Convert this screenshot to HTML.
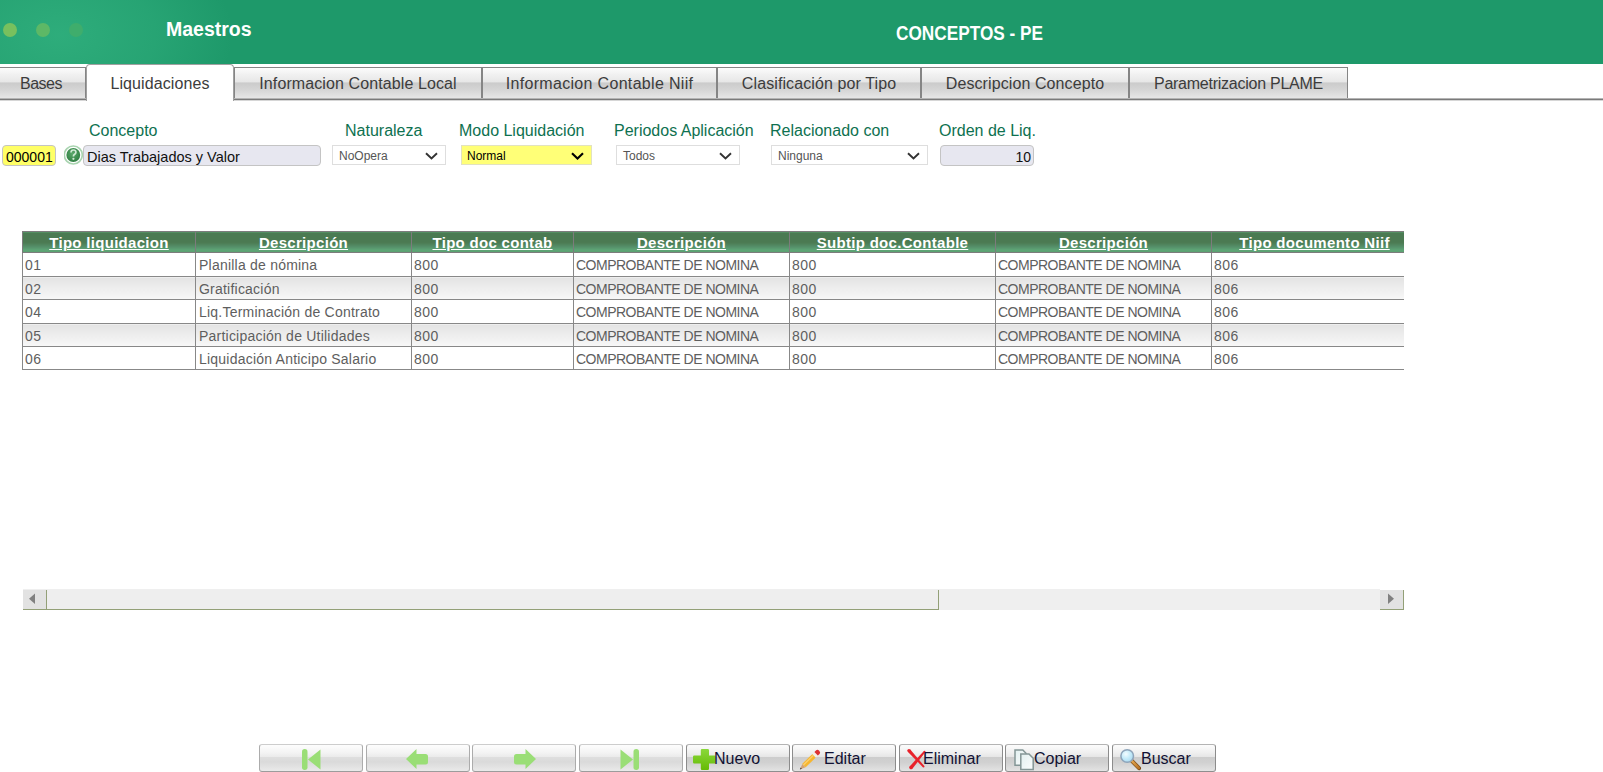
<!DOCTYPE html>
<html>
<head>
<meta charset="utf-8">
<style>
*{box-sizing:border-box;margin:0;padding:0}
html,body{width:1603px;height:772px;overflow:hidden;background:#fff;font-family:"Liberation Sans",sans-serif;position:relative}
.abs{position:absolute}
#hdr{left:0;top:0;width:1603px;height:64px;background:#1e996a;overflow:hidden}
#hdr .glow{left:-110px;top:-70px;width:340px;height:210px;background:radial-gradient(ellipse at center,rgba(62,192,140,0.50) 0%,rgba(62,192,140,0.28) 40%,rgba(62,192,140,0) 72%)}
.dot{width:14px;height:14px;border-radius:50%;top:23px}
#t1{left:166px;top:18px;color:#fff;font-weight:bold;font-size:19.5px;line-height:22px;white-space:nowrap}
#t2{left:896px;top:21.5px;color:#fff;font-weight:bold;font-size:20.5px;line-height:22px;white-space:nowrap;transform:scaleX(0.84);transform-origin:0 0}
#tabline{left:0;top:98px;width:1603px;height:3px;z-index:2;background:linear-gradient(#b4b4b4 0%,#b4b4b4 33.3%,#7a7a7a 33.3%,#7a7a7a 66.6%,#d6d6d6 66.6%)}
.tab{position:absolute;top:67px;height:33px;border:1px solid #858585;border-bottom:none;
 background:linear-gradient(#fcfcfc 0%,#f1f1f1 20%,#e7e7e7 43%,#cbcbcb 47%,#d5d5d5 68%,#e5e5e5 92%,#e9e9e9 100%);
 color:#3c3c3c;font-size:16px;letter-spacing:0.1px;text-align:center;line-height:29px;padding-top:1px;white-space:nowrap}
.tab.act{top:64px;height:37px;z-index:3;background:#fff;border-bottom:none;border-radius:4px 4px 0 0;line-height:35px;border-color:#a0a0a0}
.lbl{position:absolute;top:121.5px;color:#0e7150;font-size:16px;line-height:18px;white-space:nowrap}
.inp{position:absolute;top:145px;height:21px;border:1px solid #c4c4c4;border-radius:4px;background:#e7e7f0;color:#111;font-size:14px;line-height:21px;white-space:nowrap;overflow:hidden}
.sel{position:absolute;top:145px;height:20px;border:1px solid #dedede;background:#fff;color:#555;font-size:12px;line-height:20px;padding-left:6px;white-space:nowrap}
.sel svg{position:absolute;right:7px;top:6px}
#grid{left:22px;top:231px;width:1382px;height:140px;overflow:hidden}
table{border-collapse:collapse;table-layout:fixed;font-size:14px}
th{height:21px;border:1px solid #7c7c7c;background:linear-gradient(#4b7a52 0%,#4b7a52 50%,#55906a 72%,#5ea676 88%,#5aa070 100%);color:#fff;font-weight:bold;font-size:15px;letter-spacing:0.3px;text-decoration:underline;text-align:center;white-space:nowrap;padding:1px 0 0 0;line-height:18px}
td{border:1px solid #888;color:#5e5e5e;padding:3px 0 0 2px;white-space:nowrap;line-height:18px;vertical-align:top}
td.m{letter-spacing:0.22px;padding-left:3px}
td.u{letter-spacing:-0.5px}
td.d{letter-spacing:0.5px}
tr.alt td{background:linear-gradient(#e3e3e3,#f8f8f8)}
.sbtn{position:absolute;top:590px;width:24px;height:20px;background:#e2e2e2}
.btn{position:absolute;top:744px;height:28px;width:104px;border:1px solid #acacac;border-top-color:#cdcdcd;border-bottom-color:#9c9c9c;border-radius:3px;
 background:linear-gradient(#fdfdfd 0%,#f3f3f3 30%,#ebebeb 45%,#dedede 48%,#dadada 65%,#e5e5e5 90%,#eaeaea 100%);color:#111133;font-size:16px;white-space:nowrap}
.btn.dk{border-color:#8c8c8c;border-top-color:#b4b4b4;border-bottom-color:#8e8e8e;background:linear-gradient(#fcfcfc 0%,#efefef 30%,#e6e6e6 45%,#cdcdcd 48%,#d1d1d1 68%,#e0e0e0 95%,#e4e4e4 100%)}
.btn svg{position:absolute}
.btn span{position:absolute;top:5px;line-height:18px}
</style>
</head>
<body>
<div id="hdr" class="abs">
  <div class="glow abs"></div>
  <div class="dot abs" style="left:3px;background:#78c05e"></div>
  <div class="dot abs" style="left:36px;background:#5db866"></div>
  <div class="dot abs" style="left:69px;background:#3fad6c"></div>
  <div id="t1" class="abs">Maestros</div>
  <div id="t2" class="abs">CONCEPTOS - PE</div>
</div>
<div id="tabline" class="abs"></div>
<div class="tab" style="left:-20px;width:106px;letter-spacing:-0.5px;text-align:left;padding-left:39px">Bases</div>
<div class="tab act" style="left:86px;width:148px">Liquidaciones</div>
<div class="tab" style="left:234px;width:248px">Informacion Contable Local</div>
<div class="tab" style="left:482px;width:235px;letter-spacing:0.32px">Informacion Contable Niif</div>
<div class="tab" style="left:717px;width:204px">Clasificación por Tipo</div>
<div class="tab" style="left:921px;width:208px">Descripcion Concepto</div>
<div class="tab" style="left:1129px;width:219px;letter-spacing:-0.25px">Parametrizacion PLAME</div>

<div class="lbl" style="left:89px">Concepto</div>
<div class="lbl" style="left:345px">Naturaleza</div>
<div class="lbl" style="left:459px">Modo Liquidación</div>
<div class="lbl" style="left:614px">Periodos Aplicación</div>
<div class="lbl" style="left:770px">Relacionado con</div>
<div class="lbl" style="left:939px">Orden de Liq.</div>

<div class="inp" style="left:2px;width:54px;background:#ffff66;color:#000;padding-left:3px;line-height:23px">000001</div>
<svg class="abs" style="left:64px;top:145px" width="19" height="20" viewBox="0 0 19 20"><defs><radialGradient id="hq" cx="0.45" cy="0.4" r="0.65"><stop offset="0" stop-color="#5aa86a"/><stop offset="0.7" stop-color="#3a8a4c"/><stop offset="1" stop-color="#2e7a40"/></radialGradient></defs>
  <circle cx="9.3" cy="10" r="9" fill="none" stroke="#8cc596" stroke-width="1.6" opacity="0.75"/>
  <circle cx="9.3" cy="10" r="6.9" fill="url(#hq)"/>
  <path d="M7 7.6 Q7 5 9.4 5 Q11.9 5 11.9 7.3 Q11.9 8.7 10.4 9.6 Q9.4 10.2 9.4 11.4" fill="none" stroke="#cfe8d3" stroke-width="1.7"/>
  <circle cx="9.4" cy="13.8" r="1.1" fill="#cfe8d3"/>
</svg>
<div class="inp" style="left:83px;width:238px;padding-left:3px;font-size:14.5px;line-height:23px">Dias Trabajados y Valor</div>

<div class="sel" style="left:332px;width:114px;line-height:21px">NoOpera<svg width="13" height="8" viewBox="0 0 13 8"><path d="M1 1.2 L6.5 6.5 L12 1.2" fill="none" stroke="#333" stroke-width="1.9"/></svg></div>
<div class="sel" style="left:461px;width:131px;background:#ffff77;border-color:#e2e2c0;color:#000;padding-left:5px;line-height:21px">Normal<svg width="13" height="8" viewBox="0 0 13 8"><path d="M1 1.2 L6.5 6.5 L12 1.2" fill="none" stroke="#000" stroke-width="2.1"/></svg></div>
<div class="sel" style="left:616px;width:124px;line-height:21px">Todos<svg width="13" height="8" viewBox="0 0 13 8"><path d="M1 1.2 L6.5 6.5 L12 1.2" fill="none" stroke="#333" stroke-width="1.9"/></svg></div>
<div class="sel" style="left:771px;width:157px;line-height:21px">Ninguna<svg width="13" height="8" viewBox="0 0 13 8"><path d="M1 1.2 L6.5 6.5 L12 1.2" fill="none" stroke="#333" stroke-width="1.9"/></svg></div>
<div class="inp" style="left:940px;width:94px;text-align:right;padding-right:2px;line-height:23px">10</div>

<div id="grid" class="abs">
<table style="width:1395px">
<colgroup><col style="width:173px"><col style="width:216px"><col style="width:162px"><col style="width:216px"><col style="width:206px"><col style="width:216px"><col style="width:206px"></colgroup>
<tr><th>Tipo liquidacion</th><th>Descripción</th><th>Tipo doc contab</th><th>Descripción</th><th>Subtip doc.Contable</th><th>Descripción</th><th>Tipo documento Niif</th></tr>
<tr style="height:24px"><td class="d">01</td><td class="m">Planilla de nómina</td><td class="d">800</td><td class="u">COMPROBANTE DE NOMINA</td><td class="d">800</td><td class="u">COMPROBANTE DE NOMINA</td><td class="d">806</td></tr>
<tr class="alt" style="height:23px"><td class="d">02</td><td class="m">Gratificación</td><td class="d">800</td><td class="u">COMPROBANTE DE NOMINA</td><td class="d">800</td><td class="u">COMPROBANTE DE NOMINA</td><td class="d">806</td></tr>
<tr style="height:24px"><td class="d">04</td><td class="m">Liq.Terminación de Contrato</td><td class="d">800</td><td class="u">COMPROBANTE DE NOMINA</td><td class="d">800</td><td class="u">COMPROBANTE DE NOMINA</td><td class="d">806</td></tr>
<tr class="alt" style="height:23px"><td class="d">05</td><td class="m">Participación de Utilidades</td><td class="d">800</td><td class="u">COMPROBANTE DE NOMINA</td><td class="d">800</td><td class="u">COMPROBANTE DE NOMINA</td><td class="d">806</td></tr>
<tr style="height:23px"><td class="d">06</td><td class="m">Liquidación Anticipo Salario</td><td class="d">800</td><td class="u">COMPROBANTE DE NOMINA</td><td class="d">800</td><td class="u">COMPROBANTE DE NOMINA</td><td class="d">806</td></tr>
</table>
</div>
<div class="abs" style="left:23px;top:589px;width:1357px;height:21px;background:#efefef"></div>
<div class="abs" style="left:47px;top:590px;width:892px;height:20px;background:#eeeeee;border-right:1px solid #93a077;border-bottom:1px solid #93a077"></div>
<div class="sbtn" style="left:23px;border-right:1px solid #93a077;border-bottom:1px solid #93a077"><svg class="abs" style="left:5px;top:3px" width="8" height="12" viewBox="0 0 8 12"><path d="M7 0.5 L7 11 L1 5.8 Z" fill="#808080"/></svg></div>
<div class="sbtn" style="left:1380px;border-right:1px solid #93a077;border-bottom:1px solid #93a077"><svg class="abs" style="left:7px;top:3px" width="8" height="12" viewBox="0 0 8 12"><path d="M1 0.5 L1 11 L7 5.8 Z" fill="#808080"/></svg></div>

<div class="btn" style="left:259px"><svg style="left:41px;top:3px" width="21" height="23" viewBox="0 0 21 23"><rect x="1" y="1" width="5.5" height="21" rx="2.7" fill="#9ade76"/><path d="M19.5 1.5 L19.5 21.5 L7 11.5 Z" fill="#9ade76"/></svg></div>
<div class="btn" style="left:366px"><svg style="left:38px;top:3px" width="24" height="22" viewBox="0 0 24 22"><path d="M1 11 L11.5 1 L11.5 6 L20.5 6 Q23 6 23 8.5 L23 14 Q23 16.5 20.5 16.5 L11.5 16.5 L11.5 21 Z" fill="#9ade76"/></svg></div>
<div class="btn" style="left:472px"><svg style="left:40px;top:3px" width="24" height="22" viewBox="0 0 24 22"><path d="M23 11 L12.5 1 L12.5 6 L3.5 6 Q1 6 1 8.5 L1 14 Q1 16.5 3.5 16.5 L12.5 16.5 L12.5 21 Z" fill="#9ade76"/></svg></div>
<div class="btn" style="left:579px"><svg style="left:39px;top:3px" width="22" height="23" viewBox="0 0 22 23"><path d="M1.5 1.5 L1.5 21.5 L14 11.5 Z" fill="#9ade76"/><rect x="14.5" y="1" width="5.5" height="21" rx="2.7" fill="#9ade76"/></svg></div>
<div class="btn dk" style="left:686px"><svg style="left:5px;top:3px" width="24" height="23" viewBox="0 0 24 23"><defs><linearGradient id="pg" x1="0" y1="0" x2="0" y2="1"><stop offset="0" stop-color="#8ad83a"/><stop offset="1" stop-color="#66bb06"/></linearGradient></defs><path d="M8.8 2.2 Q8.8 1 10 1 L15.8 1 Q17 1 17 2.2 L17 7.5 L22.6 7.5 Q23.6 7.5 23.6 8.7 L23.6 14.3 Q23.6 15.5 22.6 15.5 L17 15.5 L17 20.8 Q17 22 15.8 22 L10 22 Q8.8 22 8.8 20.8 L8.8 15.5 L2.2 15.5 Q1 15.5 1 14.3 L1 8.7 Q1 7.5 2.2 7.5 L8.8 7.5 Z" fill="url(#pg)"/></svg><span style="left:27px">Nuevo</span></div>
<div class="btn dk" style="left:792px"><svg style="left:5px;top:3px" width="25" height="25" viewBox="0 0 25 25"><g transform="translate(1.9 21.5) rotate(-44) scale(0.94)"><path d="M0 0 L6 -2.5 L6 2.5 Z" fill="#d2a274"/><path d="M0 0 L2 -0.85 L2 0.85 Z" fill="#333"/><rect x="6" y="-2.6" width="15" height="5.2" fill="#f6b630"/><rect x="6" y="-1.6" width="15" height="1.4" fill="#fbd070"/><rect x="21" y="-2.6" width="3" height="5.2" fill="#f3efe6"/><path d="M24 -2.6 L26.6 -2.6 Q28.6 -2.6 28.6 0 Q28.6 2.6 26.6 2.6 L24 2.6 Z" fill="#dc3232"/></g></svg><span style="left:31px">Editar</span></div>
<div class="btn dk" style="left:899px"><svg style="left:7px;top:3px" width="21" height="22" viewBox="0 0 21 22"><g fill="#e8222b"><path d="M0.74 3.75 L15.94 19.21 L17.26 17.99 L3.26 1.45 Z"/><circle cx="2.0" cy="2.6" r="1.7"/><circle cx="16.6" cy="18.6" r="0.9"/><path d="M16.91 3.02 L2.63 18.43 L5.37 20.77 L18.29 4.18 Z"/><circle cx="17.6" cy="3.6" r="0.9"/><circle cx="4.0" cy="19.6" r="1.8"/></g></svg><span style="left:23px">Eliminar</span></div>
<div class="btn dk" style="left:1005px"><svg style="left:7px;top:4px" width="22" height="22" viewBox="0 0 22 22"><defs><linearGradient id="cg" x1="0" y1="0" x2="1" y2="1"><stop offset="0" stop-color="#e2f0f0"/><stop offset="1" stop-color="#fbfdfd"/></linearGradient></defs><path d="M2 1 L9.8 1 L13 4.2 L13 16.2 L2 16.2 Z" fill="url(#cg)" stroke="#849696" stroke-width="1.5"/><path d="M7.8 5 L16 5 L20.2 9.2 L20.2 20.4 L7.8 20.4 Z" fill="url(#cg)" stroke="#849696" stroke-width="1.5"/></svg><span style="left:28px">Copiar</span></div>
<div class="btn dk" style="left:1112px"><svg style="left:6px;top:3px" width="24" height="24" viewBox="0 0 24 24"><defs><radialGradient id="lg" cx="0.4" cy="0.35" r="0.7"><stop offset="0" stop-color="#f4fcff"/><stop offset="0.5" stop-color="#c6ecfa"/><stop offset="1" stop-color="#a8d8f0"/></radialGradient><linearGradient id="hg" x1="0" y1="0" x2="1" y2="1"><stop offset="0" stop-color="#e6a850"/><stop offset="1" stop-color="#b87428"/></linearGradient></defs><path d="M12.6 12.6 L20 20.2" stroke="#7a4a18" stroke-width="4" stroke-linecap="round"/><path d="M12.6 12.6 L19.8 20" stroke="url(#hg)" stroke-width="2.6" stroke-linecap="round"/><circle cx="8.2" cy="8" r="6.3" fill="url(#lg)" stroke="#8ea4ba" stroke-width="1.5"/></svg><span style="left:28px">Buscar</span></div>
</body>
</html>
